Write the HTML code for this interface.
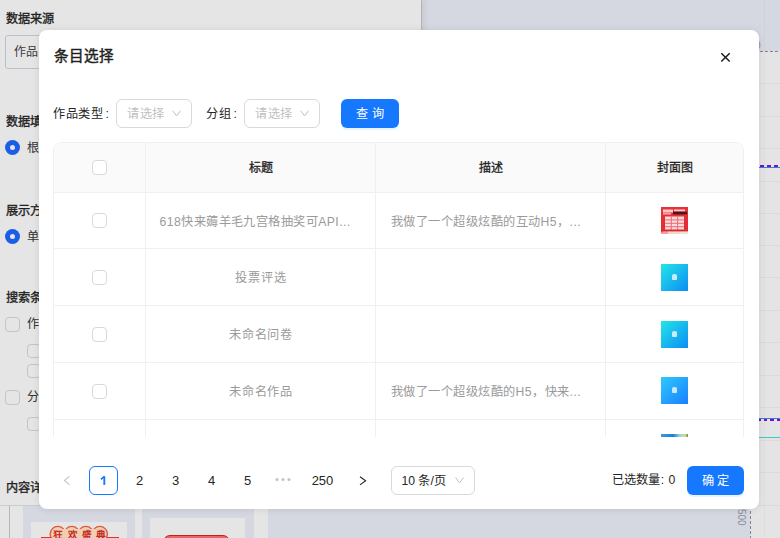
<!DOCTYPE html>
<html lang="zh-CN">
<head>
<meta charset="utf-8">
<style>
*{box-sizing:border-box;margin:0;padding:0}
html,body{width:780px;height:538px;overflow:hidden}
body{position:relative;background:#d5d8e0;font-family:"Liberation Sans",sans-serif;color:#262626}
.abs{position:absolute}
.t{position:absolute;white-space:nowrap;line-height:1}
/* background left panel */
#lp{left:0;top:0;width:422px;height:505px;background:#e5e5e5;border-right:1px solid #b4b4b4;box-shadow:2px 0 6px rgba(0,0,0,.08)}
.lbl{font-size:12.2px;font-weight:400;-webkit-text-stroke:0.35px #1f1f1f;color:#1f1f1f}
.radio{width:15px;height:15px;border-radius:50%;background:#1a5ee8}
.radio:after{content:"";position:absolute;left:5px;top:5px;width:5px;height:5px;border-radius:50%;background:#e5e5e5}
.cb{border:1px solid #c4c4c4;border-radius:4px;background:#e5e5e5}
/* modal */
#modal{left:39px;top:30px;width:720px;height:479px;background:#fff;border-radius:8px;box-shadow:0 0 8px rgba(0,0,0,.07),0 2px 6px rgba(0,0,0,.03)}
.sel{border:1px solid #d9d9d9;border-radius:6px;background:#fff}
.ph{color:#bfbfbf;font-size:12.2px;letter-spacing:0.5px;padding-top:0.5px}
.btn{background:#1677ff;border-radius:6px;color:#fff;font-size:12.2px;text-align:center;box-shadow:0 2px 0 rgba(5,145,255,.1);padding-top:1px;word-spacing:0.5px}
#tbl{left:14px;top:112px;width:691px;height:295px;overflow:hidden}
.th{background:#fafafa}
.cell{position:absolute;border-right:1px solid #f0f0f0;border-bottom:1px solid #f0f0f0}
.hd{font-size:12px;font-weight:400;-webkit-text-stroke:0.3px #1f1f1f;color:#1f1f1f;padding-top:1px}
.td{font-size:12.2px;color:#9a9a9a;letter-spacing:0.8px;padding-top:1px}
.tcb{position:absolute;width:15px;height:15px;border:1px solid #d9d9d9;border-radius:4px;background:#fff}
.pgi{font-size:13px;color:#262626;text-align:center;border-radius:6px}
.hl{position:absolute;left:1px;width:689px;height:1px;background:#f0f0f0}
.vl{position:absolute;top:1px;width:1px;height:400px;background:#f0f0f0}
.cellt{position:absolute;text-align:center;white-space:nowrap}
.cov1,.cov2,.cov3,.cov4{width:27px;height:27px}
.cov1{background:#e8353a}
.cov2{background:linear-gradient(135deg,#22e6e6,#0d8cf5)}
.cov3{background:linear-gradient(135deg,#2ec8ff,#1a80ff)}
.cov4{background:linear-gradient(90deg,#3d9ad8 0%,#1f7fd8 45%,#9fd0e8 70%,#cfe08a 90%,#6a8a40 100%)}
</style>
</head>
<body>
<!-- background page -->
<div id="lp" class="abs">
  <div class="t lbl" style="left:6px;top:13px">数据来源</div>
  <div class="abs" style="left:5px;top:35px;width:100px;height:34px;border:1px solid #b6c0cf;border-radius:3px"></div>
  <div class="t" style="left:14px;top:46px;font-size:12px;color:#3a3a3a">作品</div>
  <div class="t lbl" style="left:6px;top:116px">数据填充</div>
  <div class="abs radio" style="left:5px;top:140px"></div>
  <div class="t" style="left:27px;top:141.5px;font-size:12.2px;color:#333">根</div>
  <div class="t lbl" style="left:6px;top:205px">展示方式</div>
  <div class="abs radio" style="left:5px;top:229px"></div>
  <div class="t" style="left:27px;top:230.5px;font-size:12.2px;color:#333">单</div>
  <div class="t lbl" style="left:6px;top:292px">搜索条件</div>
  <div class="abs cb" style="left:5px;top:317px;width:15px;height:15px"></div>
  <div class="t" style="left:27px;top:317.5px;font-size:12.2px;color:#333">作</div>
  <div class="abs cb" style="left:27px;top:344px;width:14px;height:14px"></div>
  <div class="abs cb" style="left:27px;top:364px;width:14px;height:14px"></div>
  <div class="abs cb" style="left:5px;top:390px;width:15px;height:15px"></div>
  <div class="t" style="left:27px;top:390.5px;font-size:12.2px;color:#333">分</div>
  <div class="abs cb" style="left:27px;top:417px;width:14px;height:14px"></div>
  <div class="t lbl" style="left:6px;top:482px">内容详情</div>
</div>
<!-- bottom strip -->
<div class="abs" style="left:0;top:505px;width:268px;height:33px;background:#e5e5e5;border-top:1px solid #c8cbcf"></div>
<div class="abs" style="left:9px;top:506px;width:1px;height:32px;background:#b0b8c1"></div>
<div class="abs" style="left:23px;top:506px;width:112px;height:32px;background:#d5d8e0"></div>
<div class="abs" style="left:142px;top:506px;width:112px;height:32px;background:#d5d8e0"></div>
<div class="abs" style="left:31px;top:522px;width:96px;height:16px;background:#e5e5e5"></div>
<svg class="abs" style="left:32px;top:522px" width="96" height="16" viewBox="0 0 96 16"><rect x="9" y="15" width="78" height="3" fill="#d03a2a"/><g fill="#f1cdb2" stroke="#dc5a3e" stroke-width="1.4"><circle cx="25.8" cy="12" r="7.6"/><circle cx="39.8" cy="12" r="7.6"/><circle cx="53.8" cy="12" r="7.6"/><circle cx="67.8" cy="12" r="7.6"/></g><rect x="25.8" y="7" width="42" height="12" fill="#f1cdb2"/><text x="21.3" y="16" font-size="9.6" font-weight="700" fill="#c42a1e" letter-spacing="4.4">狂欢盛典</text></svg>
<div class="abs" style="left:150px;top:518px;width:95px;height:20px;background:#e5e5e5"></div>
<div class="abs" style="left:163px;top:535px;width:67px;height:14px;border-radius:7px;border:1.3px solid #c21f1f;background:linear-gradient(#e86a6a,#e03a3a)"></div>
<!-- right canvas -->
<div class="abs" style="left:750px;top:51px;width:30px;height:487px;background:#e4e4e4"></div>
<div class="abs" style="left:751px;top:83px;width:29px;height:1px;background:#dadada"></div><div class="abs" style="left:751px;top:116px;width:29px;height:1px;background:#dadada"></div><div class="abs" style="left:751px;top:148px;width:29px;height:1px;background:#dadada"></div><div class="abs" style="left:751px;top:181px;width:29px;height:1px;background:#dadada"></div><div class="abs" style="left:751px;top:213px;width:29px;height:1px;background:#dadada"></div><div class="abs" style="left:751px;top:245px;width:29px;height:1px;background:#dadada"></div><div class="abs" style="left:751px;top:277px;width:29px;height:1px;background:#dadada"></div><div class="abs" style="left:751px;top:310px;width:29px;height:1px;background:#dadada"></div><div class="abs" style="left:751px;top:342px;width:29px;height:1px;background:#dadada"></div><div class="abs" style="left:751px;top:375px;width:29px;height:1px;background:#dadada"></div><div class="abs" style="left:751px;top:407px;width:29px;height:1px;background:#dadada"></div><div class="abs" style="left:751px;top:440px;width:29px;height:1px;background:#dadada"></div><div class="abs" style="left:751px;top:472px;width:29px;height:1px;background:#dadada"></div><div class="abs" style="left:751px;top:505px;width:29px;height:1px;background:#dadada"></div>
<div class="abs" style="left:764px;top:0;width:1px;height:538px;background:rgba(0,0,0,.025)"></div>
<div class="abs" style="left:750px;top:51px;width:30px;height:1px;background:repeating-linear-gradient(90deg,#7f858c 0 3px,transparent 3px 5px);background-position:-0.1px 0"></div>
<div class="abs" style="left:750px;top:51px;width:1px;height:487px;background:repeating-linear-gradient(180deg,#7f858c 0 3px,transparent 3px 5px)"></div>
<div class="abs" style="left:751px;top:165px;width:29px;height:2px;background:repeating-linear-gradient(90deg,transparent 0 1.7px,#9400d3 1.7px 5.5px,transparent 5.5px 7.2px)"></div>
<div class="abs" style="left:751px;top:167px;width:29px;height:1px;background:#1a8fd6"></div>
<div class="abs" style="left:751px;top:418px;width:29px;height:1px;background:#1a8fd6"></div>
<div class="abs" style="left:751px;top:419px;width:29px;height:2px;background:repeating-linear-gradient(90deg,#9400d3 0 3.5px,transparent 3.5px 6.5px)"></div>
<div class="abs" style="left:751px;top:437px;width:29px;height:1px;background:#40c8c8"></div>
<div class="t" style="left:754.5px;top:40px;font-size:11px;color:#8a9099">0</div>
<div class="t" style="top:509px;font-size:10.5px;color:#8a9099;transform:rotate(90deg) scaleX(0.95);transform-origin:0 0;left:747px">500</div>

<!-- modal -->
<div id="modal" class="abs">
  <div class="t" style="left:14.5px;top:19px;font-size:14.6px;font-weight:400;-webkit-text-stroke:0.45px #1f1f1f;color:#1f1f1f">条目选择</div>
  <svg class="abs" style="left:681px;top:22px" width="12" height="12" viewBox="0 0 12 12"><path d="M1.3 1.3L9.7 9.6M9.7 1.3L1.3 9.6" stroke="#1a1a1a" stroke-width="1.45"/></svg>

  <div class="t" style="left:14px;top:77.5px;font-size:12.2px;letter-spacing:0.5px;color:#262626">作品类型<span style="margin-left:2.5px">:</span></div>
  <div class="abs sel" style="left:77px;top:69px;width:76px;height:29px"></div>
  <div class="t ph" style="left:88px;top:77px">请选择</div>
  <svg class="abs" style="left:133px;top:80px" width="10" height="8" viewBox="0 0 10 8"><path d="M0.6 0.6L4.6 5.9L8.6 0.6" stroke="#bfbfbf" stroke-width="1" fill="none"/></svg>

  <div class="t" style="left:167px;top:77.5px;font-size:12.2px;letter-spacing:0.5px;color:#262626">分组<span style="margin-left:2.5px">:</span></div>
  <div class="abs sel" style="left:205px;top:69px;width:76px;height:29px"></div>
  <div class="t ph" style="left:216px;top:77px">请选择</div>
  <svg class="abs" style="left:261px;top:80px" width="10" height="8" viewBox="0 0 10 8"><path d="M0.6 0.6L4.6 5.9L8.6 0.6" stroke="#bfbfbf" stroke-width="1" fill="none"/></svg>

  <div class="abs btn" style="left:302px;top:69px;width:58px;height:29px;line-height:29px">查 询</div>

  <div id="tbl" class="abs">
    <div class="abs" style="left:0;top:0;width:691px;height:400px;border:1px solid #f0f0f0;border-radius:8px 8px 0 0"></div>
    <div class="abs" style="left:1px;top:1px;width:689px;height:49px;background:#fafafa;border-radius:7px 7px 0 0"></div>
    <div class="hl" style="top:50px"></div>
    <div class="hl" style="top:106px"></div>
    <div class="hl" style="top:163px"></div>
    <div class="hl" style="top:220px"></div>
    <div class="hl" style="top:277px"></div>
    <div class="vl" style="left:92px"></div>
    <div class="vl" style="left:322px"></div>
    <div class="vl" style="left:552px"></div>
    <div class="tcb" style="left:39px;top:18px"></div>
    <div class="cellt hd" style="left:93px;top:1px;width:229px;height:49px;line-height:49px">标题</div>
    <div class="cellt hd" style="left:323px;top:1px;width:229px;height:49px;line-height:49px">描述</div>
    <div class="cellt hd" style="left:553px;top:1px;width:137px;height:49px;line-height:49px">封面图</div>

    <div class="tcb" style="left:39px;top:71px"></div>
    <div class="cellt td" style="left:106.5px;top:51px;width:198px;height:56px;line-height:56px;text-align:left"><span style="letter-spacing:0.45px">618快来薅羊毛九宫格抽奖可API...</span></div>
    <div class="cellt td" style="left:337.5px;top:51px;width:198px;height:56px;line-height:56px;text-align:left"><span style="letter-spacing:0.5px">我做了一个超级炫酷的互动H5，...</span></div>
    <svg class="abs" style="left:608px;top:65px;filter:blur(0.3px)" width="27" height="27" viewBox="0 0 27 27"><defs><linearGradient id="g1" x1="0" y1="0" x2="0" y2="1"><stop offset="0" stop-color="#e8323a"/><stop offset=".8" stop-color="#e52a33"/><stop offset="1" stop-color="#f0b8a8"/></linearGradient></defs><rect width="27" height="27" fill="url(#g1)"/><rect x="2" y="2.5" width="10" height="3" fill="#f8c8ca"/><rect x="13" y="2.5" width="11" height="1.8" fill="#f8d0d2"/><rect x="2" y="6" width="8" height="1.5" fill="#f2a6aa"/><rect x="12" y="4.8" width="14" height="2.6" fill="#4a1618"/><rect x="4" y="9.5" width="19" height="13.5" fill="#f9dadc"/><path d="M4 12.9H23M4 16.3H23M4 19.7H23M10.3 9.5V23M16.6 9.5V23" stroke="#ee6a70" stroke-width="1"/><rect x="0" y="22.5" width="27" height="2" fill="#dc2530"/><rect x="2" y="24.5" width="5" height="2.5" fill="#f4a0a4"/><rect x="7" y="24.5" width="12" height="2.5" fill="#f2d8cc"/><rect x="19" y="24.5" width="8" height="2.5" fill="#e2eacb"/></svg>

    <div class="tcb" style="left:39px;top:128px"></div>
    <div class="cellt td" style="left:109px;top:107px;width:198px;height:56px;line-height:56px">投票评选</div>
    <div class="abs cov2" style="left:608px;top:122px"><div class="abs" style="left:10.9px;top:9.8px;width:5px;height:6.5px;background:#e6f4ff;border-radius:2px 2px 1px 1px;opacity:.85;filter:blur(0.25px)"></div></div>

    <div class="tcb" style="left:39px;top:185px"></div>
    <div class="cellt td" style="left:109px;top:164px;width:198px;height:56px;line-height:56px">未命名问卷</div>
    <div class="abs cov2" style="left:608px;top:179px"><div class="abs" style="left:10.9px;top:9.8px;width:5px;height:6.5px;background:#e6f4ff;border-radius:2px 2px 1px 1px;opacity:.85;filter:blur(0.25px)"></div></div>

    <div class="tcb" style="left:39px;top:242px"></div>
    <div class="cellt td" style="left:109px;top:221px;width:198px;height:56px;line-height:56px">未命名作品</div>
    <div class="cellt td" style="left:337.5px;top:221px;width:198px;height:56px;line-height:56px;text-align:left"><span style="letter-spacing:0.5px">我做了一个超级炫酷的H5，快来...</span></div>
    <div class="abs cov3" style="left:608px;top:235px"><div class="abs" style="left:10.9px;top:9.8px;width:5px;height:6.5px;background:#e6f4ff;border-radius:2px 2px 1px 1px;opacity:.85;filter:blur(0.25px)"></div></div>

    <div class="abs cov4" style="left:608px;top:292px"></div>
  </div>

  <!-- pagination -->
  <svg class="abs" style="left:23px;top:445px" width="10" height="12" viewBox="0 0 10 12"><path d="M7.4 1.3L2.4 5.5L7.5 9.6" stroke="#c4c4c4" stroke-width="1.1" fill="none"/></svg>
  <div class="abs pgi" style="left:50px;top:436px;width:29px;height:29px;border:1px solid #1677ff"></div><svg class="abs" style="left:60px;top:444px" width="10" height="13" viewBox="0 0 10 13"><path d="M5.3 2.2V10.9" stroke="#1677ff" stroke-width="1.9"/><path d="M1.9 5.4L5.2 2.6" stroke="#1677ff" stroke-width="1.6"/></svg>
  <div class="abs pgi" style="left:86px;top:436px;width:29px;height:29px;line-height:29px">2</div>
  <div class="abs pgi" style="left:122px;top:436px;width:29px;height:29px;line-height:29px">3</div>
  <div class="abs pgi" style="left:158px;top:436px;width:29px;height:29px;line-height:29px">4</div>
  <div class="abs pgi" style="left:194px;top:436px;width:29px;height:29px;line-height:29px">5</div>
  <svg class="abs" style="left:230px;top:440px" width="29" height="20" viewBox="0 0 29 20"><g fill="#c4c4c4"><circle cx="8" cy="9.5" r="1.6"/><circle cx="14" cy="9.5" r="1.6"/><circle cx="20" cy="9.5" r="1.6"/></g></svg>
  <div class="abs pgi" style="left:266px;top:436px;width:35px;height:29px;line-height:29px">250</div>
  <svg class="abs" style="left:318px;top:445px" width="12" height="12" viewBox="0 0 12 12"><path d="M3 1.7L8.6 5.8L3 9.9" stroke="#262626" stroke-width="1.1" fill="none"/></svg>
  <div class="abs sel" style="left:352px;top:436px;width:84px;height:29px"></div>
  <div class="t" style="left:362.5px;top:445px;font-size:12.2px;color:#262626">10 条/页</div>
  <svg class="abs" style="left:416px;top:447px" width="10" height="8" viewBox="0 0 10 8"><path d="M0.6 0.6L4.6 5.9L8.6 0.6" stroke="#bfbfbf" stroke-width="1" fill="none"/></svg>

  <div class="t" style="left:572.5px;top:444px;font-size:12.2px;color:#262626">已选数量<span style="margin-left:1.2px">:</span><span style="margin-left:4.5px">0</span></div>
  <div class="abs btn" style="left:648px;top:436px;width:57px;height:29px;line-height:29px">确 定</div>
</div>
</body>
</html>
